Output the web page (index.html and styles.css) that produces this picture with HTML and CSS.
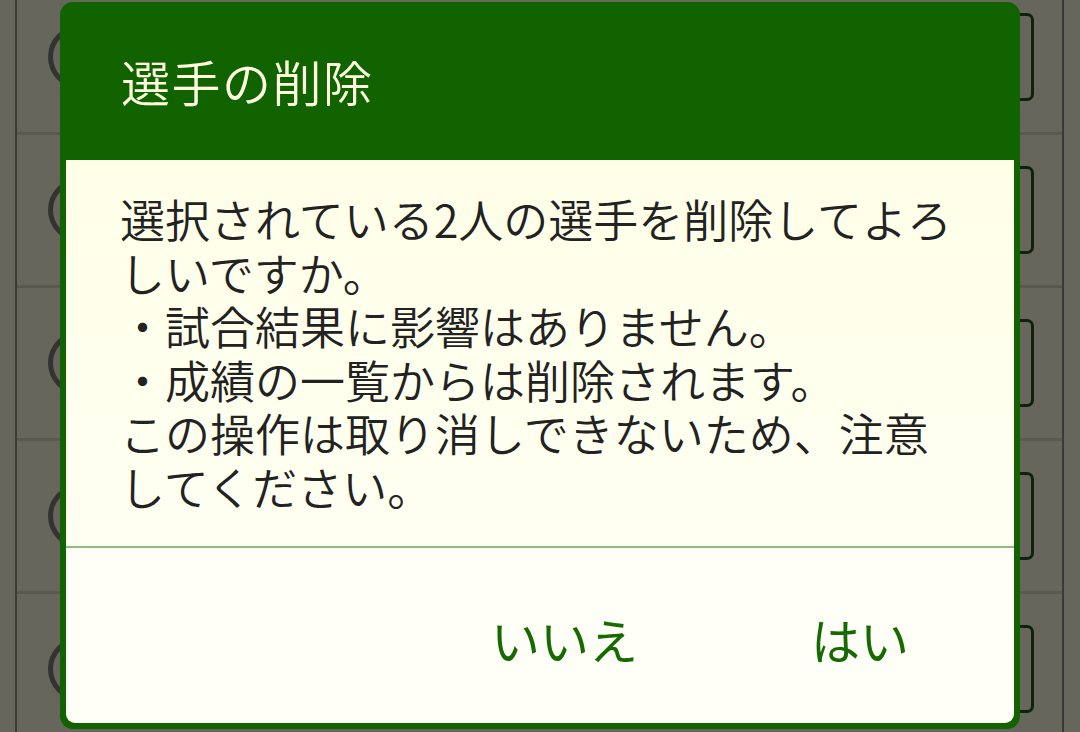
FILE: index.html
```html
<!DOCTYPE html>
<html lang="ja">
<head>
<meta charset="utf-8">
<title>選手の削除</title>
<link rel="stylesheet" href="styles.css">
</head>
<body>
<div class="list">
  <div class="row"><span class="ring"></span><span class="box"></span></div>
  <div class="row"><span class="ring"></span><span class="box"></span></div>
  <div class="row"><span class="ring"></span><span class="box"></span></div>
  <div class="row"><span class="ring"></span><span class="box"></span></div>
  <div class="row"><span class="ring"></span><span class="box"></span></div>
</div>
<div class="dialog">
  <div class="header"><h1 class="title">選手の削除</h1></div>
  <div class="panel">
    <div class="message">選択されている2人の選手を削除してよろ<br>しいですか。<br>・試合結果に影響はありません。<br>・成績の一覧からは削除されます。<br>この操作は取り消しできないため、注意<br>してください。</div>
    <div class="actions">
      <span class="btn">いいえ</span>
      <span class="btn">はい</span>
    </div>
  </div>
</div>
</body>
</html>
```
FILE: styles.css
```css
html, body {
  margin: 0;
  padding: 0;
}
body {
  width: 1080px;
  height: 732px;
  overflow: hidden;
  background: #66665c;
  font-family: "Noto Sans CJK JP", "Noto Sans", sans-serif;
  position: relative;
}
.list {
  margin-left: 15px;
  width: 1049px;
  height: 732px;
  border-left: 2px solid #3a3a36;
  border-right: 2px solid #3a3a36;
  box-sizing: border-box;
  display: flex;
  flex-direction: column;
  overflow: hidden;
}
.row {
  flex: 0 0 auto;
  height: 150px;
  border-bottom: 3px solid #595950;
  display: flex;
  align-items: center;
  justify-content: space-between;
  padding: 0 28px 0 31px;
}
.row:first-child {
  margin-top: -18px;
}
.ring {
  width: 54px;
  height: 54px;
  border: 5px solid #333330;
  border-radius: 50%;
}
.box {
  width: 40px;
  height: 82px;
  border: 3px solid #0f220c;
  border-radius: 7px;
}
.dialog {
  position: absolute;
  left: 60px;
  top: 2px;
  width: 960px;
  height: 727px;
  background: #116300;
  border-radius: 13px;
  display: flex;
  flex-direction: column;
  box-sizing: border-box;
  padding: 0 6px 6px 6px;
}
.header {
  height: 158px;
  display: flex;
  align-items: center;
  padding-left: 55px;
  box-sizing: border-box;
}
.title {
  margin: 0;
  font-size: 49px;
  font-weight: 350;
  color: #ffffe2;
  letter-spacing: 1.5px;
  line-height: 1;
  padding-bottom: 2px;
}
.panel {
  flex: 1;
  display: flex;
  flex-direction: column;
  border-radius: 0 0 9px 9px;
  overflow: hidden;
  background: #fffff8;
}
.message {
  padding: 32px 30px 32px 54px;
  font-size: 45px;
  font-weight: 350;
  line-height: 53.6px;
  color: #222222;
  white-space: nowrap;
  background: linear-gradient(#ffffe8, #fffff2);
  border-bottom: 2px solid #8dbd7e;
}
.actions {
  flex: 1;
  display: flex;
  justify-content: flex-end;
  align-items: center;
  padding: 6px 105px 0 0;
  gap: 173px;
}
.btn {
  font-size: 49px;
  font-weight: 400;
  color: #156b00;
  line-height: 1;
}
```
